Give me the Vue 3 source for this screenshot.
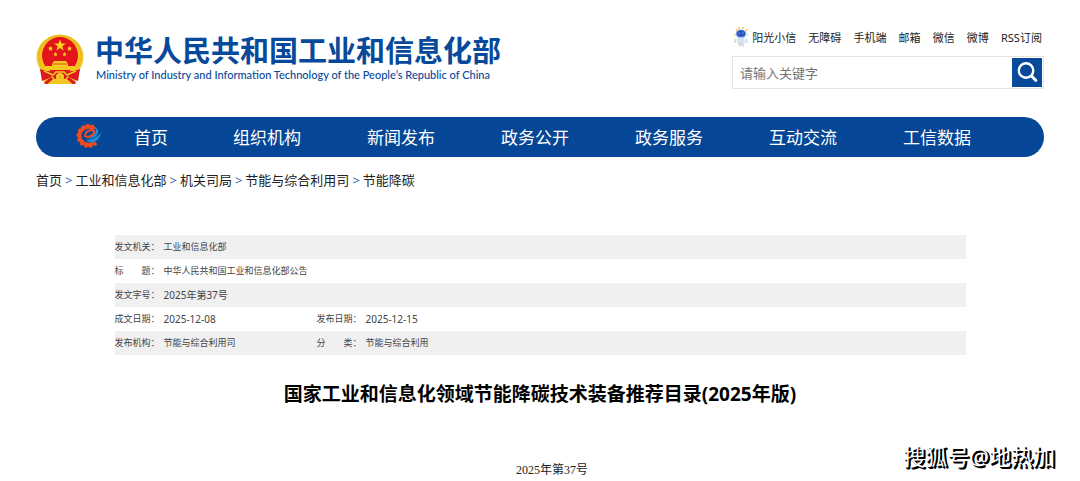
<script setup>
import { ref } from 'vue'

const keyword = ref('')
const quickLinks = ['阳光小信', '无障碍', '手机端', '邮箱', '微信', '微博', 'RSS订阅']
const navItems = ['组织机构', '新闻发布', '政务公开', '政务服务', '互动交流', '工信数据']
const crumbs = ['首页', '工业和信息化部', '机关司局', '节能与综合利用司', '节能降碳']
const gearTeeth = Array.from({ length: 10 }, (_, i) => 140 + i * 27)
</script>

<template>
  <div class="page">
    <header class="header">
      <a class="brand" href="#">
        <svg class="emblem" viewBox="0 0 48 50" aria-hidden="true">
          <ellipse cx="24" cy="23" rx="23.5" ry="22.5" fill="#f2c522" />
          <path d="M3 32 L9 50 H39 L45 32Z" fill="#f2c522" />
          <ellipse cx="24" cy="22" rx="21" ry="20" fill="none" stroke="#e8b41d" stroke-width="1" />
          <ellipse cx="24" cy="21.5" rx="18" ry="18.5" fill="#e3151b" />
          <path d="M24 5.5l1.5 4.1h4.3l-3.5 2.6 1.3 4.2-3.6-2.5-3.6 2.5 1.3-4.2-3.5-2.6h4.3z" fill="#fbd51e" />
          <path d="M14.5 12l.7 1.6 1.8.2-1.3 1.2.4 1.8-1.6-.9-1.6.9.4-1.8-1.3-1.2 1.8-.2zM33.5 12l.7 1.6 1.8.2-1.3 1.2.4 1.8-1.6-.9-1.6.9.4-1.8-1.3-1.2 1.8-.2zM19.5 18l.6 1.4 1.6.2-1.2 1 .4 1.6-1.4-.8-1.4.8.4-1.6-1.2-1 1.6-.2zM28.5 18l.6 1.4 1.6.2-1.2 1 .4 1.6-1.4-.8-1.4.8.4-1.6-1.2-1 1.6-.2z" fill="#fbd51e" />
          <path d="M16 30l2-3h12l2 3v2h6l3 4H7l3-4h6z" fill="#f7ca20" />
          <path d="M17 30h14" stroke="#d9531c" />
          <path d="M4 35q7 3 13 2h14q6 1 13-2l-2 12q-6-2-10-5l-4 4h-8l-4-4q-4 3-10 5z" fill="#dc1a1d" />
          <path d="M8 37l9 4 3-3h8l3 3 9-4" fill="none" stroke="#f2c522" stroke-width="1.5" />
          <path d="M15 50l3-5h12l3 5z" fill="#f2c522" />
          <circle cx="24" cy="43" r="4" fill="#f6ca25" />
          <circle cx="24" cy="43" r="1.5" fill="#e8b41d" />
          <path d="M9 50l7-6M39 50l-7-6" stroke="#dc1a1d" stroke-width="3" />
        </svg>
        <span class="brand-text">
          <span class="brand-cn">中华人民共和国工业和信息化部</span>
          <span class="brand-en">Ministry of Industry and Information Technology of the People’s Republic of China</span>
        </span>
      </a>
      <div class="tools">
        <nav class="quick" aria-label="快捷入口">
          <svg class="mascot" viewBox="0 0 14 20" aria-hidden="true">
            <path d="M2 4l1-2M5 2V0M9 2V0M12 4l1-2M1 8H0M13 8h1" stroke="#f0c756" stroke-width="1.5" />
            <ellipse cx="7" cy="7" rx="5.5" ry="4.5" fill="#b6cdf5" />
            <ellipse cx="7" cy="6.5" rx="4.5" ry="3.5" fill="#2e55c0" />
            <path d="M4.5 6h1M8.5 6h1" stroke="#8cc8ff" />
            <path d="M4 11h6l1 5-2 3H5l-2-3z" fill="#d5e3f6" />
            <path d="M2 12l-1 4M12 12l1 4" stroke="#c2d7f1" stroke-width="1.5" />
            <path d="M7 15v3M5 19h1M9 19h1" stroke="#e7bd5e" />
          </svg>
          <a v-for="link in quickLinks" :key="link" href="#">{{ link }}</a>
        </nav>
        <form class="search" @submit.prevent>
          <input v-model="keyword" type="text" placeholder="请输入关键字" aria-label="请输入关键字" />
          <button type="submit" aria-label="搜索">
            <svg viewBox="0 0 30 30" aria-hidden="true">
              <circle cx="14" cy="13" r="7.5" fill="none" stroke="#fff" stroke-width="2.5" />
              <path d="M19 18l6 6" stroke="#fff" stroke-width="3" />
            </svg>
          </button>
        </form>
      </div>
    </header>

    <nav class="main-nav" aria-label="主导航">
      <a class="home" href="#">
        <svg viewBox="0 0 26 26" aria-hidden="true">
          <g fill="#ed4b20">
            <rect v-for="angle in gearTeeth" :key="angle" x="11" y="1" width="3" height="4" :transform="`rotate(${angle} 12.5 13)`" />
          </g>
          <path d="M18.5 6A9 9 0 1 0 17 20.5" fill="none" stroke="#ed4b20" stroke-width="4" />
          <path d="M9 14q0-6 6-7 4 0 3 3-2 4-8 4" fill="none" stroke="#ed4b20" stroke-width="2" />
          <path d="M10 16q6 3 15-6-2 7-7 9-6 1-8-3z" fill="#218dd5" />
          <path d="M19 4q5 3 2 8-3 4-9 4 10-4 7-12z" fill="#218dd5" />
        </svg>
        <span>首页</span>
      </a>
      <a v-for="item in navItems" :key="item" href="#">{{ item }}</a>
    </nav>

    <nav class="crumbs" aria-label="当前位置">
      <template v-for="(crumb, i) in crumbs" :key="crumb">
        <span v-if="i" class="sep">&gt;</span>
        <a href="#">{{ crumb }}</a>
      </template>
    </nav>

    <main class="article">
      <table class="meta">
        <colgroup>
          <col class="label-col" />
          <col class="value-col" />
          <col class="label-col" />
          <col />
        </colgroup>
        <tbody>
          <tr>
            <th scope="row">发文机关：</th>
            <td colspan="3">工业和信息化部</td>
          </tr>
          <tr>
            <th scope="row"><span class="spread"><span>标</span><span>题：</span></span></th>
            <td colspan="3">中华人民共和国工业和信息化部公告</td>
          </tr>
          <tr>
            <th scope="row">发文字号：</th>
            <td class="numeric" colspan="3">2025年第37号</td>
          </tr>
          <tr>
            <th scope="row">成文日期：</th>
            <td class="numeric">2025-12-08</td>
            <th scope="row">发布日期：</th>
            <td class="numeric">2025-12-15</td>
          </tr>
          <tr>
            <th scope="row">发布机构：</th>
            <td>节能与综合利用司</td>
            <th scope="row"><span class="spread"><span>分</span><span>类：</span></span></th>
            <td>节能与综合利用</td>
          </tr>
        </tbody>
      </table>
      <h1>国家工业和信息化领域节能降碳技术装备推荐目录(2025年版)</h1>
      <p class="number">2025年第37号</p>
    </main>
    <div class="watermark">搜狐号@地热加</div>
  </div>
</template>

<style>
body {
  margin: 0;
  background: #fff;
}
</style>

<style scoped>
.page {
  position: relative;
  padding: 0 36px;
  color: #222;
  font-family: "Noto Sans", "Noto Sans CJK SC", sans-serif;
}
a {
  color: inherit;
  text-decoration: none;
}
.header {
  display: flex;
  justify-content: space-between;
  align-items: flex-start;
  padding-top: 27px;
  height: 90px;
}
.brand {
  display: flex;
  gap: 11px;
  padding-top: 7px;
  color: #07499a;
}
.emblem {
  width: 48px;
  height: 50px;
}
.brand-text {
  display: flex;
  flex-direction: column;
}
.brand-cn {
  font-size: 29px;
  font-weight: 700;
  line-height: 34px;
}
.brand-en {
  padding-left: 1px;
  font-family: Lato, "Noto Sans", sans-serif;
  font-size: 11px;
  font-weight: 500;
  line-height: 14px;
  white-space: nowrap;
}
.tools {
  width: 312px;
}
.quick {
  display: flex;
  justify-content: space-between;
  align-items: center;
  height: 20px;
  padding: 0 2px;
  font-size: 11px;
}
.mascot {
  width: 14px;
  height: 20px;
  margin-right: -8px;
}
.search {
  display: flex;
  box-sizing: border-box;
  height: 33px;
  margin-top: 9px;
  padding: 1px;
  border: 1px solid #e3e3e3;
}
.search input {
  flex: 1;
  min-width: 0;
  padding: 0 6px;
  border: 0;
  outline: 0;
  color: #333;
  font: 13px "Noto Sans", "Noto Sans CJK SC", sans-serif;
}
.search input::placeholder {
  color: #757575;
}
.search button {
  width: 30px;
  padding: 0;
  border: 0;
  background: #07499a;
}
.search svg {
  display: block;
  width: 30px;
  height: 29px;
}
.main-nav {
  display: grid;
  grid-template-columns: 164fr repeat(6, 134fr) 40fr;
  align-items: center;
  box-sizing: border-box;
  height: 40px;
  padding-bottom: 2px;
  border-radius: 20px;
  background: #054796;
  color: #fff;
  font-size: 17px;
  text-align: center;
}
.home {
  display: flex;
  align-items: center;
  gap: 32px;
  padding-left: 40px;
}
.home svg {
  width: 26px;
  height: 26px;
}
.crumbs {
  display: flex;
  gap: 3px;
  margin-top: 13px;
  font-size: 13px;
  line-height: 20px;
}
.sep {
  color: #336ba9;
}
.article {
  padding-top: 45px;
}
.meta {
  width: 851px;
  max-width: 100%;
  margin: 0 auto;
  border-collapse: collapse;
  table-layout: fixed;
  color: #444;
  font-size: 9px;
}
.label-col {
  width: 49px;
}
.value-col {
  width: 153px;
}
.meta tr:nth-child(odd) {
  background: #f0f0f0;
}
.meta th,
.meta td {
  height: 24px;
  padding: 0;
  font-weight: 400;
  line-height: 24px;
  text-align: left;
}
.meta .numeric {
  font-size: 10px;
}
.spread {
  display: flex;
  justify-content: space-between;
  width: 45px;
}
h1 {
  margin: 24px 0 0;
  color: #000;
  font-size: 19px;
  line-height: 30px;
  text-align: center;
}
.number {
  margin: 52px 0 0;
  font-family: "Liberation Serif", "Noto Sans CJK SC", serif;
  font-size: 12px;
  line-height: 18px;
  text-align: center;
  text-indent: 2em;
}
.watermark {
  position: absolute;
  right: 25px;
  bottom: 7px;
  color: #fff;
  font-size: 22px;
  line-height: 32px;
  text-shadow: 1px 1px 0 #000, 2px 1px 0 #000, 2px 2px 0 #000;
}
</style>
